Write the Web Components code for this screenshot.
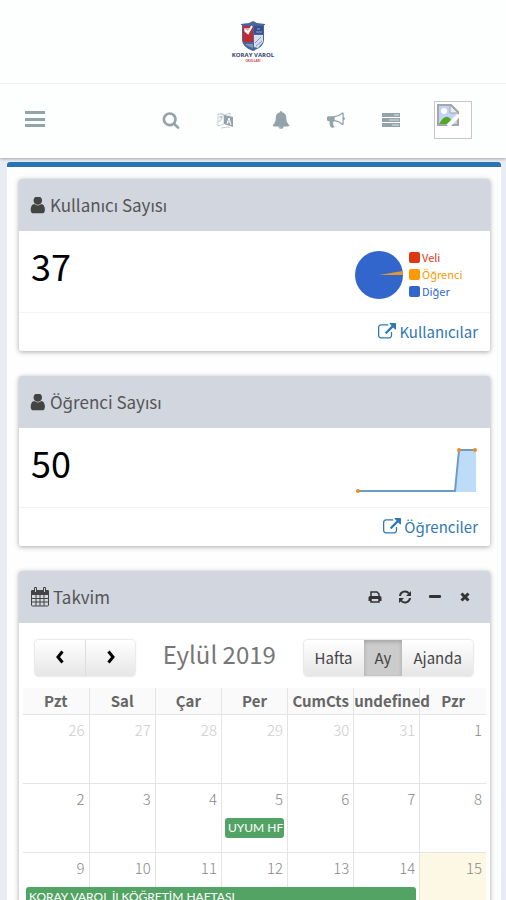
<!DOCTYPE html>
<html lang="tr">
<head>
	<meta charset="utf-8">
	<meta name="viewport" content="width=device-width, initial-scale=1">
	<title>Koray Varol</title>
	<style>
		body {
			margin: 0;
			background: #e9ecf3;
			color: #555;
			font-family: "Noto Sans CJK SC", "Noto Sans", sans-serif;
			font-size: 15px;
		}
		main {
			margin: 4px 5px 0 7px;
			padding: 12px 11px 12px 12px;
			border-top: 5px solid #2b74b3;
			border-radius: 3px;
			background: #fefefe;
			display: flex;
			flex-direction: column;
			gap: 25px;
		}
		.number { font-size: 36px; line-height: 44px; color: #000 }
	</style>
</head>
<body>
	<site-header></site-header>

	<main>
		<panel-card icon="user">
			<span slot="title">Kullanıcı Sayısı</span>
			<span class="number">37</span>
			<pie-chart></pie-chart>
			<card-link slot="footer">Kullanıcılar</card-link>
		</panel-card>

		<panel-card icon="user">
			<span slot="title">Öğrenci Sayısı</span>
			<span class="number">50</span>
			<spark-line></spark-line>
			<card-link slot="footer">Öğrenciler</card-link>
		</panel-card>

		<panel-card icon="calendar" flush>
			<span slot="title">Takvim</span>
			<panel-tools slot="tools"></panel-tools>
			<month-calendar></month-calendar>
		</panel-card>
	</main>

	<!-- header -->
	<template id="site-header-template">
		<style>
			:host { display: block; background: #fdfefe; box-shadow: 0 1px 3px rgba(0,0,0,.3) }
			.logo {
				height: 83px;
				display: flex;
				flex-direction: column;
				align-items: center;
				justify-content: center;
				border-bottom: 1px solid #f1f2f3;
				color: #33436f;
				font: bold 6px/8px "Open Sans", sans-serif;
				text-decoration: none;
			}
			.logo svg { width: 24px; height: 30px }
			.logo small { font-size: 3px; line-height: 4px; color: #d0454c }
			nav {
				height: 72px;
				padding: 0 34px 2px 24px;
				display: flex;
				align-items: center;
				color: #93a3aa;
			}
			button {
				border: 0;
				padding: 0;
				background: none;
				color: inherit;
				width: 55px;
				height: 40px;
				display: flex;
				align-items: center;
				justify-content: center;
			}
			.menu { width: 22px; margin-right: auto }
			.avatar {
				width: 36px;
				height: 36px;
				margin-left: 16px;
				border: 1px solid #c6c8c9;
				background: #fff;
			}
			.avatar svg { display: block; margin: 2px }
		</style>
		<a class="logo" href="#">
			<svg viewBox="0 0 24 30" aria-hidden="true">
				<path d="M0 3 8 2 12 0l4 2 8 1v1h-1v15q0 7-11 11Q1 26 1 19V4H0z" fill="#4a649c"/>
				<path d="M2 5h10v16H2z" fill="#bd2c33"/>
				<path d="M3 7h8l-5 6-3-3z" fill="#eaa7aa"/>
				<path d="m4 9 3 3 4-7" fill="none" stroke="#fff" stroke-width="2"/>
				<path d="M13 14h9v7l-5 6-4-1z" fill="#d7dfec"/>
				<path d="m14 22 6-6m-5 9 6-5" stroke="#8399bf" stroke-width="1"/>
				<path d="M13 5h9v8h-9z" fill="#34508e"/>
				<path d="M15 11h6M16 8h3" stroke="#91a5ca"/>
				<path d="M4 23h8v4q-6-2-8-4" fill="#8195bd"/>
			</svg>
			<span>KORAY VAROL</span>
			<small>OKULLARI</small>
		</a>
		<nav>
			<button class="menu" aria-label="Menü"><ui-icon name="bars" size="22"></ui-icon></button>
			<button aria-label="Ara"><ui-icon name="search" size="18"></ui-icon></button>
			<button aria-label="Dil"><ui-icon name="language" size="17"></ui-icon></button>
			<button aria-label="Bildirimler"><ui-icon name="bell" size="18"></ui-icon></button>
			<button aria-label="Duyurular"><ui-icon name="bullhorn" size="18"></ui-icon></button>
			<button aria-label="Görevler"><ui-icon name="tasks" size="18"></ui-icon></button>
			<div class="avatar">
				<svg width="22" height="22" viewBox="0 0 22 22" aria-hidden="true">
					<path d="M1 1h13l7 7v13H1z" fill="#c3d3f4" stroke="#a3a7aa" stroke-width="2"/>
					<circle cx="7" cy="7" r="3" fill="#fff"/>
					<path d="M2 20q5-9 9-7 3 1 5 7z" fill="#55a929"/>
					<path d="m13 1 8 8h-8z" fill="#e9ecee" stroke="#a3a7aa"/>
					<path d="m11 22 11-11" stroke="#fff" stroke-width="4"/>
				</svg>
			</div>
		</nav>
	</template>

	<!-- card: title bar, body, optional footer -->
	<template id="panel-card-template">
		<style>
			:host { display: block; background: #fff; border-radius: 2px; box-shadow: 0 1px 5px rgba(0,0,0,.35) }
			header {
				height: 52px;
				padding: 0 18px 0 11px;
				display: flex;
				align-items: center;
				gap: 3px;
				background: #d2d6de;
				border-radius: 2px 2px 0 0;
				font-size: 17px;
				line-height: 24px;
				color: #555;
			}
			header ui-icon { color: #444 }
			.tools { margin-left: auto }
			.body {
				padding: 12px;
				display: flex;
				justify-content: space-between;
				align-items: flex-start;
			}
			:host([flush]) .body { display: block; padding: 0 4px }
			footer { border-top: 1px solid #f4f4f4; padding: 7px 12px; display: flex; justify-content: flex-end }
			:host([flush]) footer { display: none }
		</style>
		<header>
			<ui-icon></ui-icon>
			<slot name="title"></slot>
			<div class="tools"><slot name="tools"></slot></div>
		</header>
		<div class="body"><slot></slot></div>
		<footer><slot name="footer"></slot></footer>
	</template>

	<template id="card-link-template">
		<style>
			:host { display: block }
			a {
				display: flex;
				align-items: center;
				gap: 3px;
				color: #3178b5;
				line-height: 24px;
				text-decoration: none;
			}
		</style>
		<a href="#"><ui-icon name="external" size="18"></ui-icon><slot></slot></a>
	</template>

	<template id="panel-tools-template">
		<style>
			:host { display: flex; gap: 16px }
			button { border: 0; padding: 0; background: none; color: #333; display: flex }
		</style>
		<button aria-label="Yazdır"><ui-icon name="print" size="14"></ui-icon></button>
		<button aria-label="Yenile"><ui-icon name="refresh" size="14"></ui-icon></button>
		<button aria-label="Küçült"><ui-icon name="minus" size="14"></ui-icon></button>
		<button aria-label="Kapat"><ui-icon name="close" size="14"></ui-icon></button>
	</template>

	<template id="pie-chart-template">
		<style>
			:host { display: flex; align-items: center; gap: 6px; width: 123px; margin-top: 6px }
			ul { margin: 0; padding: 0; list-style: none; font-size: 11px; line-height: 17px }
			li { display: flex; align-items: center; gap: 2px; color: var(--c) }
			li::before { content: ""; width: 11px; height: 11px; border-radius: 2px; background: var(--c) }
		</style>
		<svg width="48" height="48" viewBox="-24 -24 48 48" aria-hidden="true">
			<circle r="24" fill="#3366cc"/>
			<path d="M0 0 23.6-4A24 24 0 0 1 24 0z" fill="#e0982f"/>
		</svg>
		<ul>
			<li style="--c: #dc3912">Veli</li>
			<li style="--c: #ff9900">Öğrenci</li>
			<li style="--c: #3366cc">Diğer</li>
		</ul>
	</template>

	<template id="spark-line-template">
		<style>
			:host { display: block; margin-top: 6px }
			svg { display: block }
		</style>
		<svg width="123" height="49" viewBox="0 0 123 49" aria-hidden="true">
			<path d="M100 46 104 4h17v42z" fill="#bedcf7"/>
			<path d="M3 45h97l4-41h17" fill="none" stroke="#6e9dc4" stroke-width="2"/>
			<g fill="#f28c1c">
				<circle cx="3" cy="45" r="2"/>
				<circle cx="104" cy="4" r="2"/>
				<circle cx="120" cy="4" r="2"/>
			</g>
		</svg>
	</template>

	<!-- calendar -->
	<template id="month-calendar-template">
		<style>
			:host { display: block }
			.toolbar {
				padding: 17px 13px 12px 12px;
				display: flex;
				justify-content: space-between;
				align-items: flex-start;
			}
			h2 { margin: 0; font-weight: normal; font-size: 24px; line-height: 28px; color: #777 }
			.group { display: flex; border-radius: 4px; box-shadow: 0 0 2px rgba(0,0,0,.3) }
			button {
				height: 36px;
				padding: 0 11px;
				border: 0;
				background: linear-gradient(#fff, #e6e6e6);
				color: #444;
				font: inherit;
				line-height: 24px;
			}
			button:first-child { border-radius: 4px 0 0 4px }
			button:last-child { border-radius: 0 4px 4px 0 }
			.nav button { width: 50px; padding: 0; color: #000 }
			.nav button + button { border-left: 1px solid #ddd }
			button.active { background: #ccc; box-shadow: inset 0 2px 4px rgba(0,0,0,.2) }
			table { width: 100%; table-layout: fixed; border-collapse: collapse }
			th { padding: 0; height: 26px; background: #fafafa; color: #666; white-space: nowrap; line-height: 24px }
			th, td { border-left: 1px solid #e4e4e4 }
			th:first-child, td:first-child { border-left: 0 }
			tr.days td {
				height: 30px;
				padding: 0 4px 4px 0;
				border-top: 1px solid #e4e4e4;
				text-align: right;
				line-height: 24px;
				font-weight: 300;
				color: #888;
			}
			tr.days td.other { color: #ccc }
			td.today { background: #fcf8e3 }
			tr.events td { height: 34px; padding: 0 3px; vertical-align: top }
			.event {
				display: block;
				height: 20px;
				padding: 0 3px;
				overflow: hidden;
				border-radius: 3px;
				background: #53a364;
				color: #fff;
				/* Lato has a proper dotted capital I */
				font-family: Lato, sans-serif;
				font-size: 12px;
				line-height: 20px;
				white-space: nowrap;
				text-decoration: none;
			}
		</style>
		<div class="toolbar">
			<div class="group nav">
				<button aria-label="Önceki"><ui-icon name="left" size="14"></ui-icon></button>
				<button aria-label="Sonraki"><ui-icon name="right" size="14"></ui-icon></button>
			</div>
			<h2>Eylül 2019</h2>
			<div class="group">
				<button>Hafta</button>
				<button class="active">Ay</button>
				<button>Ajanda</button>
			</div>
		</div>
		<table>
			<thead><tr></tr></thead>
			<tbody></tbody>
		</table>
	</template>

	<script>
		const FA = '0 0 1792 1792'
		// name: [viewBox, markup]
		const ICONS = {
			bars: ['0 0 22 22', '<path d="M1 2h20v3H1zM1 9h20v3H1zM1 15h20v3H1z"/>'],
			search: [FA, '<path d="M1216 832q0-185-131.5-316.5t-316.5-131.5-316.5 131.5-131.5 316.5 131.5 316.5 316.5 131.5 316.5-131.5 131.5-316.5zm512 832q0 52-38 90t-90 38q-54 0-90-38l-343-342q-179 124-399 124-143 0-273.5-55.5t-225-150-150-225-55.5-273.5 55.5-273.5 150-225 225-150 273.5-55.5 273.5 55.5 225 150 150 225 55.5 273.5q0 220-124 399l343 343q37 37 37 90z"/>'],
			language: ['0 0 17 17', '<path d="M7 3l9 2v10l-9-3z"/><path d="M1 2l6 1v9l-6 2zM3 1l5 2 5-2v3M4 16l7-1 2 1" fill="none" stroke="currentColor" opacity=".5"/><path d="M2 5h4M4 4v2M2 10l3-4" stroke="currentColor" opacity=".7"/><path d="M10 12l2-6 2 7M10 10h3" fill="none" stroke="#fff"/>'],
			bell: [FA, '<path d="M912 1696q0-16-16-16-59 0-101.5-42.5t-42.5-101.5q0-16-16-16t-16 16q0 73 51.5 124.5t124.5 51.5q16 0 16-16zm816-288q0 52-38 90t-90 38h-448q0 106-75 181t-181 75-181-75-75-181h-448q-52 0-90-38t-38-90q50-42 91-88t85-119.5 74.5-158.5 50-206 19.5-260q0-152 117-282.5t307-158.5q-8-19-8-39 0-40 28-68t68-28 68 28 28 68q0 20-8 39 190 28 307 158.5t117 282.5q0 139 19.5 260t50 206 74.5 158.5 85 119.5 91 88z"/>'],
			bullhorn: [FA, '<path d="M1664 640q53 0 90.5 37.5t37.5 90.5-37.5 90.5-90.5 37.5v384q0 52-38 90t-90 38q-417-347-812-380-58 19-91 66t-31 100.5 40 92.5q-20 33-23 65.5t6 58 33.5 55 48 50 61.5 50.5q-29 58-111.5 83t-168.5 11.5-132-55.5q-7-23-29.5-87.5t-32-94.5-23-89-15-101 3.5-98.5 22-110.5h-122q-66 0-113-47t-47-113v-192q0-66 47-113t113-47h480q435 0 896-384 52 0 90 38t38 90v384zm-128 604v-954q-394 302-768 343v270q377 42 768 341z"/>'],
			tasks: ['0 0 18 18', '<path d="M0 2h18v4H0zM0 7h18v4H0zM0 12h18v4H0z"/><path d="M12 4h5M7 9h10M10 14h7" stroke="#dfe5e8"/>'],
			user: ['192 192 1536 1536', '<path d="M1536 1399q0 109-62.5 187t-150.5 78h-854q-88 0-150.5-78t-62.5-187q0-85 8.5-160.5t31.5-152 58.5-131 94-89 134.5-34.5q131 128 313 128t313-128q76 0 134.5 34.5t94 89 58.5 131 31.5 152 8.5 160.5zm-256-887q0 159-112.5 271.5t-271.5 112.5-271.5-112.5-112.5-271.5 112.5-271.5 271.5-112.5 271.5 112.5 112.5 271.5z"/>'],
			external: [FA, '<path d="M1408 928v320q0 119-84.5 203.5t-203.5 84.5h-832q-119 0-203.5-84.5t-84.5-203.5v-832q0-119 84.5-203.5t203.5-84.5h704q14 0 23 9t9 23v64q0 14-9 23t-23 9h-704q-66 0-113 47t-47 113v832q0 66 47 113t113 47h832q66 0 113-47t47-113v-320q0-14 9-23t23-9h64q14 0 23 9t9 23zm384-864v512q0 26-19 45t-45 19-45-19l-176-176-652 652q-10 10-23 10t-23-10l-114-114q-10-10-10-23t10-23l652-652-176-176q-19-19-19-45t19-45 45-19h512q26 0 45 19t19 45z"/>'],
			calendar: ['0 0 20 20', '<path d="M2 3h16q1 0 1 1v4H1V4q0-1 1-1z"/><path d="M1.500 7v11q0 1 1 1h15q1 0 1-1V7M2 11.500h16M2 15h16M6 8v11M10 8v11M14 8v11" fill="none" stroke="currentColor"/><rect x="4" y="0" width="3" height="6" rx="1"/><rect x="13" y="0" width="3" height="6" rx="1"/><path d="M5.500 1v4M14.500 1v4" stroke="#d2d6de"/>'],
			print: ['0 0 14 14', '<path d="M3 7V2h6l2 2v3M3 9v3h8V9" fill="none" stroke="currentColor" stroke-width="1.500"/><path d="M2 6h10q1.500 0 1.500 1.500V11H11V9H3v2H.5V7.500Q.5 6 2 6z"/>'],
			refresh: ['0 0 14 14', '<path d="M2 6a5 5 0 0 1 9-2.500M12 8a5 5 0 0 1-9 2.500" fill="none" stroke="currentColor" stroke-width="2"/><path d="M13 1v5H8zM1 13V8h5z"/>'],
			minus: ['0 0 14 14', '<rect x="1" y="5" width="12" height="3" rx="1"/>'],
			close: ['0 0 14 14', '<path d="m3.500 3.500 7 7m0-7-7 7" stroke="currentColor" stroke-width="3"/>'],
			left: ['0 0 14 14', '<path d="M9.500 1.500 5 7l4.500 5.500" fill="none" stroke="currentColor" stroke-width="3"/>'],
			right: ['0 0 14 14', '<path d="M4.500 1.500 9 7l-4.500 5.500" fill="none" stroke="currentColor" stroke-width="3"/>']
		}

		class UiIcon extends HTMLElement {
			constructor() {
				super()
				this.attachShadow({mode: 'open'})
			}
			static get observedAttributes() {
				return ['name', 'size']
			}
			attributeChangedCallback() {
				const icon = ICONS[this.getAttribute('name')]
				if (!icon) return
				const size = this.getAttribute('size') || 16
				this.shadowRoot.innerHTML = `
					<style>:host { display: inline-block } svg { display: block; fill: currentColor }</style>
					<svg width="${size}" height="${size}" viewBox="${icon[0]}" aria-hidden="true">${icon[1]}</svg>`
			}
		}
		customElements.define('ui-icon', UiIcon)

		// base class, clones <tag>-template into the shadow root
		class TemplateElement extends HTMLElement {
			constructor() {
				super()
				const template = document.getElementById(this.localName + '-template')
				this.attachShadow({mode: 'open'}).appendChild(template.content.cloneNode(true))
			}
		}

		class PanelCard extends TemplateElement {
			connectedCallback() {
				const name = this.getAttribute('icon')
				const icon = this.shadowRoot.querySelector('ui-icon')
				icon.setAttribute('name', name)
				icon.setAttribute('size', name === 'user' ? 17 : 20)
			}
		}

		class MonthCalendar extends TemplateElement {
			connectedCallback() {
				const names = ['Pzt', 'Sal', 'Çar', 'Per', 'CumCts', 'undefined', 'Pzr']
				const weeks = [
					{days: [26, 27, 28, 29, 30, 31, 1], events: []},
					{days: [2, 3, 4, 5, 6, 7, 8], events: [{at: 3, span: 1, text: 'UYUM HF'}]},
					{days: [9, 10, 11, 12, 13, 14, 15], events: [{at: 0, span: 6, text: 'KORAY VAROL İLKÖĞRETİM HAFTASI'}]}
				]
				const today = 15
				const root = this.shadowRoot
				root.querySelector('thead tr').innerHTML = names.map(n => `<th scope="col">${n}</th>`).join('')

				root.querySelector('tbody').innerHTML = weeks.map((week, w) => {
					const days = week.days.map(d => {
						const cls = w === 0 && d > 7 ? 'other' : d === today ? 'today' : ''
						return `<td class="${cls}">${d}</td>`
					}).join('')

					let events = ''
					for (let i = 0; i < 7; i++) {
						const ev = week.events.find(e => e.at === i)
						if (ev) {
							events += `<td colspan="${ev.span}"><a class="event" href="#">${ev.text}</a></td>`
							i += ev.span - 1
						} else {
							events += `<td class="${week.days[i] === today ? 'today' : ''}"></td>`
						}
					}
					return `<tr class="days">${days}</tr><tr class="events">${events}</tr>`
				}).join('')
			}
		}

		customElements.define('site-header', class extends TemplateElement {})
		customElements.define('card-link', class extends TemplateElement {})
		customElements.define('panel-tools', class extends TemplateElement {})
		customElements.define('pie-chart', class extends TemplateElement {})
		customElements.define('spark-line', class extends TemplateElement {})
		customElements.define('panel-card', PanelCard)
		customElements.define('month-calendar', MonthCalendar)
	</script>
</body>
</html>
